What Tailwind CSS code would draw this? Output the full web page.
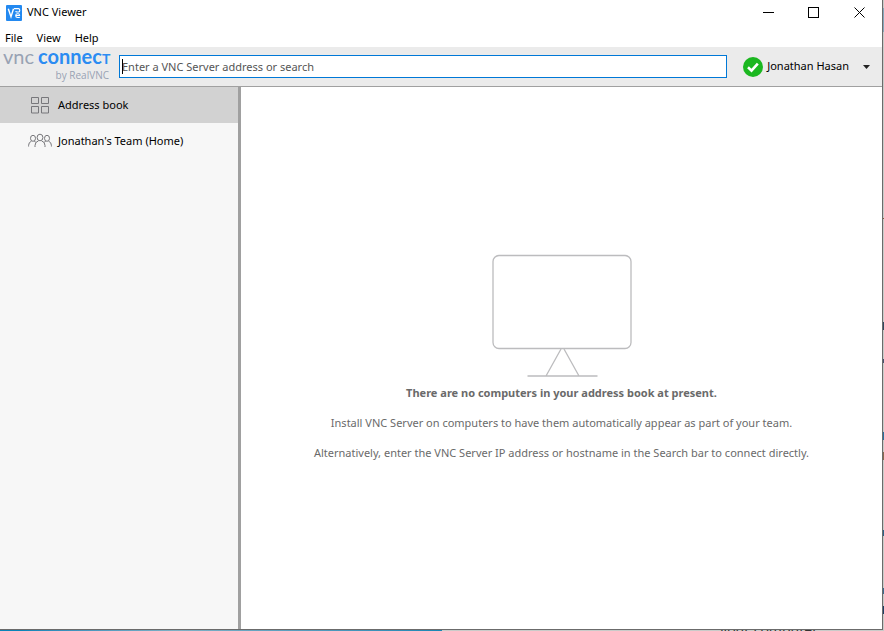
<!DOCTYPE html>
<html lang="en">
<head>
<meta charset="utf-8">
<meta name="viewport" content="width=device-width, initial-scale=1">
<title>VNC Viewer</title>
<script src="https://cdn.jsdelivr.net/npm/@tailwindcss/browser@4"></script>
</head>
<body class="relative h-screen overflow-hidden bg-[#c9cbc9] pr-px pb-px font-['Noto_Sans','Open_Sans',sans-serif] text-[11px] text-black">
<!-- Desktop showing past the window edges -->
<div class="absolute inset-x-0 bottom-0 h-px overflow-hidden" aria-hidden="true">
  <div class="absolute left-0 h-px w-1/2 bg-linear-to-r from-[#0a84b8] from-5% via-[#7fb0c4] via-40% to-[#1787b5]"></div>
  <div class="absolute left-[720px] -top-2 text-sm leading-4 text-[#333]">your computer</div>
</div>
<div class="absolute inset-y-0 right-0 w-px" aria-hidden="true">
  <div class="absolute top-2 h-6 w-px bg-[#86a8bd]"></div>
  <div class="absolute top-[218px] h-px w-px bg-[#8a5a3a]"></div>
  <div class="absolute top-[322px] h-2 w-px bg-[#30485f]"></div>
  <div class="absolute top-[359px] h-1 w-px bg-[#47506f]"></div>
  <div class="absolute top-[432px] h-2 w-px bg-[#2a6fa0]"></div>
  <div class="absolute top-[452px] h-2 w-px bg-[#8a6a50]"></div>
  <div class="absolute top-[530px] h-1.5 w-px bg-[#2c6288]"></div>
  <div class="absolute top-[588px] h-1.5 w-px bg-[#3a6a8f]"></div>
  <div class="absolute top-[606px] h-2 w-px bg-[#1d3f66]"></div>
</div>

<div class="flex h-full flex-col border-r border-b border-[#6b6b6b] bg-white">
  <header class="flex h-[25px] shrink-0 items-center pl-1.5">
    <svg class="size-4" viewBox="0 0 16 16" fill="none" aria-hidden="true">
      <rect width="16" height="16" rx="1" fill="#2389f0"/>
      <path d="M2.300 3.800l2.700 8 2.500-8" stroke="#fff" stroke-width="1.400"/>
      <path d="M8 3.600h4.400q1.300 0 1.300 1.300v.8q0 1.300-1.300 1.300h-1.400q-1.200 0-1.200-1M13.800 12.500h-2.200q-1.900 0-1.900-1.700v-.4q0-1.700 1.900-1.700h.5q1.500 0 1.500 1.800h-3.500" stroke="#fff" stroke-width="1.100"/>
    </svg>
    <h1 class="ml-[5px] flex-1">VNC Viewer</h1>
    <button class="grid h-6 w-[45px] place-items-center" aria-label="Minimize"><svg class="size-[11px]" viewBox="0 0 11 11" stroke="#000" shape-rendering="crispEdges"><path d="M0 5.500h11"/></svg></button>
    <button class="grid h-6 w-[45px] place-items-center" aria-label="Maximize"><svg class="size-[11px]" viewBox="0 0 11 11" fill="none" stroke="#000" shape-rendering="crispEdges"><rect x=".5" y=".5" width="10" height="10"/></svg></button>
    <button class="grid h-6 w-[46px] place-items-center" aria-label="Close"><svg class="size-[11px]" viewBox="0 0 11 11" stroke="#000"><path d="M.5.5l10 10M10.500.5l-10 10"/></svg></button>
  </header>

  <nav class="flex h-[22px] shrink-0 items-end gap-3.5 pb-px pl-[5px]" aria-label="Menu">
    <button class="leading-4">File</button>
    <button class="leading-4">View</button>
    <button class="leading-4">Help</button>
  </nav>

  <div class="flex h-10 shrink-0 items-center border-b border-[#a0a0a0] bg-[#ebebeb]">
    <div class="w-[119px] shrink-0 pb-1 pl-[3px] font-['Lato',sans-serif]">
      <div class="flex items-baseline gap-1 text-xl leading-4 whitespace-nowrap">
        <span class="text-[#98a2b3]">vnc</span>
        <span class="font-bold text-[#2b8cf2]">connec<span class="text-sm">T</span></span>
      </div>
      <div class="w-[106px] text-right font-['Open_Sans',sans-serif] text-[10px] leading-3 text-[#98a2b3]">by RealVNC</div>
    </div>
    <div class="relative min-w-0 flex-1">
      <input type="text" aria-label="VNC Server address or search" placeholder="Enter a VNC Server address or search" class="block h-[23px] w-full border border-[#0078d7] bg-white px-0.5 outline-none placeholder:text-[#555]">
      <span class="absolute top-1 left-[3px] h-[15px] w-px bg-black" aria-hidden="true"></span>
    </div>
    <button class="ml-4 flex items-center pr-3">
      <svg class="size-5" viewBox="0 0 20 20" fill="none" aria-hidden="true"><circle cx="10" cy="10" r="10" fill="#1bb720"/><path d="M5 10.300l3.500 3.300 6.300-7" stroke="#fff" stroke-width="2.600"/></svg>
      <span class="ml-1 whitespace-nowrap">Jonathan Hasan</span>
      <svg class="ml-3.5 h-1 w-[7px]" viewBox="0 0 7 4" aria-hidden="true"><path d="M0 0h7L3.500 4z" fill="#222"/></svg>
    </button>
  </div>

  <div class="flex min-h-0 flex-1">
    <aside class="w-[241px] shrink-0 border-r-3 border-[#a0a0a0] bg-[#f7f7f7]">
      <button class="flex h-9 w-full items-center gap-1.5 bg-[#d2d2d2] pl-7">
        <svg class="h-[18px] w-6" viewBox="0 0 24 18" fill="none" stroke="#77777b" aria-hidden="true"><path d="M3.500 1.500h7v6h-7zM13.500 1.500h7v6h-7zM3.500 10.500h7v6.500h-7zM13.500 10.500h7v6.500h-7z"/></svg>
        Address book
      </button>
      <button class="flex h-9 w-full items-center gap-1.5 pl-7">
        <svg class="h-4 w-6" viewBox="0 0 24 16" fill="none" stroke="#77777b" aria-hidden="true"><ellipse cx="12" cy="4.500" rx="2.900" ry="3.300"/><ellipse cx="5" cy="5.300" rx="2.500" ry="3"/><ellipse cx="19" cy="5.300" rx="2.500" ry="3"/><path d="M7 14v-1.500q0-3.500 3.500-4.700M17 14v-1.500q0-3.500-3.500-4.700M.6 13.500v-1.200q0-3 2.900-4.200M6.200 8.100l1.600 1.100M23.400 13.500v-1.200q0-3-2.900-4.200M17.800 8.100l-1.600 1.100"/></svg>
        Jonathan's Team (Home)
      </button>
    </aside>
    <main class="flex min-w-0 flex-1 flex-col items-center justify-center text-center text-[#6a6a6a]">
      <svg class="h-[123px] w-[140px]" viewBox="0 0 140 123" fill="none" stroke="#bcbcbe" stroke-width="1.300" aria-hidden="true"><rect x="1" y="1.500" width="138" height="93" rx="6"/><path d="M69 95L54 122M72 95L87 122M35.500 122h70"/></svg>
      <p class="mt-1.5 leading-5 font-bold">There are no computers in your address book at present.</p>
      <p class="mt-2.5 leading-5">Install VNC Server on computers to have them automatically appear as part of your team.</p>
      <p class="mt-2.5 leading-5">Alternatively, enter the VNC Server IP address or hostname in the Search bar to connect directly.</p>
    </main>
  </div>
</div>
</body>
</html>
